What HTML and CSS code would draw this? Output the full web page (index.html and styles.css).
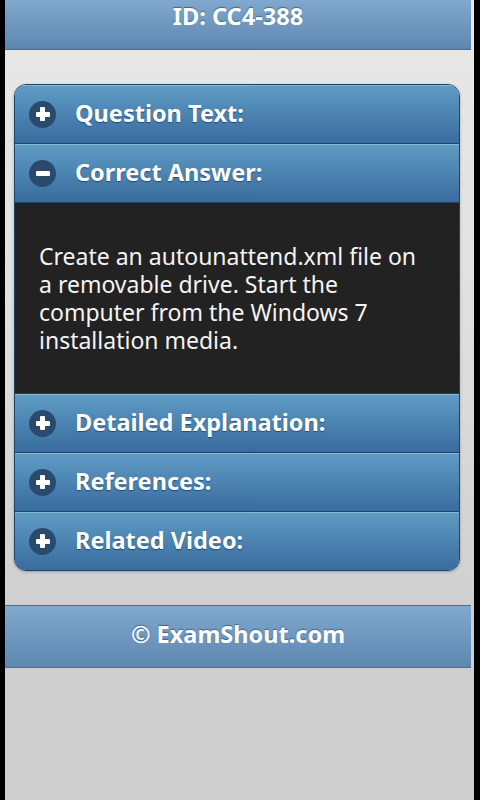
FILE: index.html
```html
<!DOCTYPE html>
<html>
<head>
<meta charset="utf-8">
<link rel="stylesheet" href="styles.css">
</head>
<body>
<div class="page">
  <div class="header"><h1 class="title">ID: CC4-388</h1></div>
  <div class="set">
    <div class="item">
      <div class="heading first"><span class="icon plus"></span><span class="label">Question Text:</span></div>
    </div>
    <div class="item">
      <div class="heading"><span class="icon minus"></span><span class="label">Correct Answer:</span></div>
      <div class="content"><p>Create an autounattend.xml file on a removable drive. Start the computer from the Windows 7 installation media.</p></div>
    </div>
    <div class="item">
      <div class="heading"><span class="icon plus"></span><span class="label">Detailed Explanation:</span></div>
    </div>
    <div class="item">
      <div class="heading"><span class="icon plus"></span><span class="label">References:</span></div>
    </div>
    <div class="item">
      <div class="heading last"><span class="icon plus"></span><span class="label">Related Video:</span></div>
    </div>
  </div>
  <div class="footer"><span class="foot-text">© ExamShout.com</span></div>
</div>
</body>
</html>
```
FILE: styles.css
```css
html, body {
  margin: 0;
  padding: 0;
  background: #000;
}
body {
  font-family: "Noto Sans", "Open Sans", "DejaVu Sans", sans-serif;
}
.page {
  margin-left: 5px;
  width: 469px;
  height: 800px;
  background: linear-gradient(#e8e8e8 0px, #e2e2e2 250px, #cfcfcf 620px, #cfcfcf 800px);
  overflow: hidden;
}
.header {
  width: 466px;
  height: 49px;
  border-bottom: 1px solid #456f9a;
  background: linear-gradient(#81a8ce, #5e87b0);
  text-align: center;
}
.title {
  margin: 0;
  padding-top: 1px;
  font-size: 23.6px;
  line-height: 30px;
  font-weight: bold;
  color: #fff;
  text-shadow: 0 -1px 1px #3e6790;
}
.set {
  margin: 34px 14px 0 9px;
  border: 1px solid #1f4468;
  border-radius: 12px;
  overflow: hidden;
  box-shadow: 0 1px 3px rgba(0,0,0,0.25);
}
.heading {
  height: 58px;
  border-top: 1px solid #1f4468;
  background: linear-gradient(#5f9cc5, #396b9e);
  display: flex;
  align-items: center;
  box-shadow: inset 0 1px 0 rgba(255,255,255,0.25);
}
.heading.first {
  border-top: none;
  height: 58px;
}
.icon {
  position: relative;
  width: 27px;
  height: 27px;
  border-radius: 50%;
  background: #294a6c;
  margin-left: 14px;
  margin-right: 19px;
  flex: none;
}
.icon::before, .plus::after {
  content: "";
  position: absolute;
  background: #fff;
  border-radius: 1px;
}
.icon::before {
  left: 6.5px;
  top: 11px;
  width: 14px;
  height: 5px;
}
.plus::after {
  left: 11px;
  top: 6.5px;
  width: 5px;
  height: 14px;
}
.label {
  font-size: 23.5px;
  font-weight: bold;
  color: #fff;
  text-shadow: 0 1px 1px #194b7e;
  margin-top: -3px;
}
.content {
  background: #222;
  border-top: 1px solid #1f4468;
  padding: 39px 34px 39px 24px;
  height: 112px;
}
.content p {
  margin: 0;
  font-size: 23px;
  line-height: 28px;
  color: #f4f4f4;
}
.footer {
  margin-top: 34px;
  width: 466px;
  height: 61px;
  border-top: 1px solid #456f9a;
  border-bottom: 1px solid #456f9a;
  background: linear-gradient(#81a8ce, #5e87b0);
  display: flex;
  justify-content: center;
  align-items: center;
}
.foot-text {
  font-size: 23.5px;
  font-weight: bold;
  color: #fff;
  text-shadow: 0 -1px 1px #3e6790;
  margin-top: -6px;
}
```
